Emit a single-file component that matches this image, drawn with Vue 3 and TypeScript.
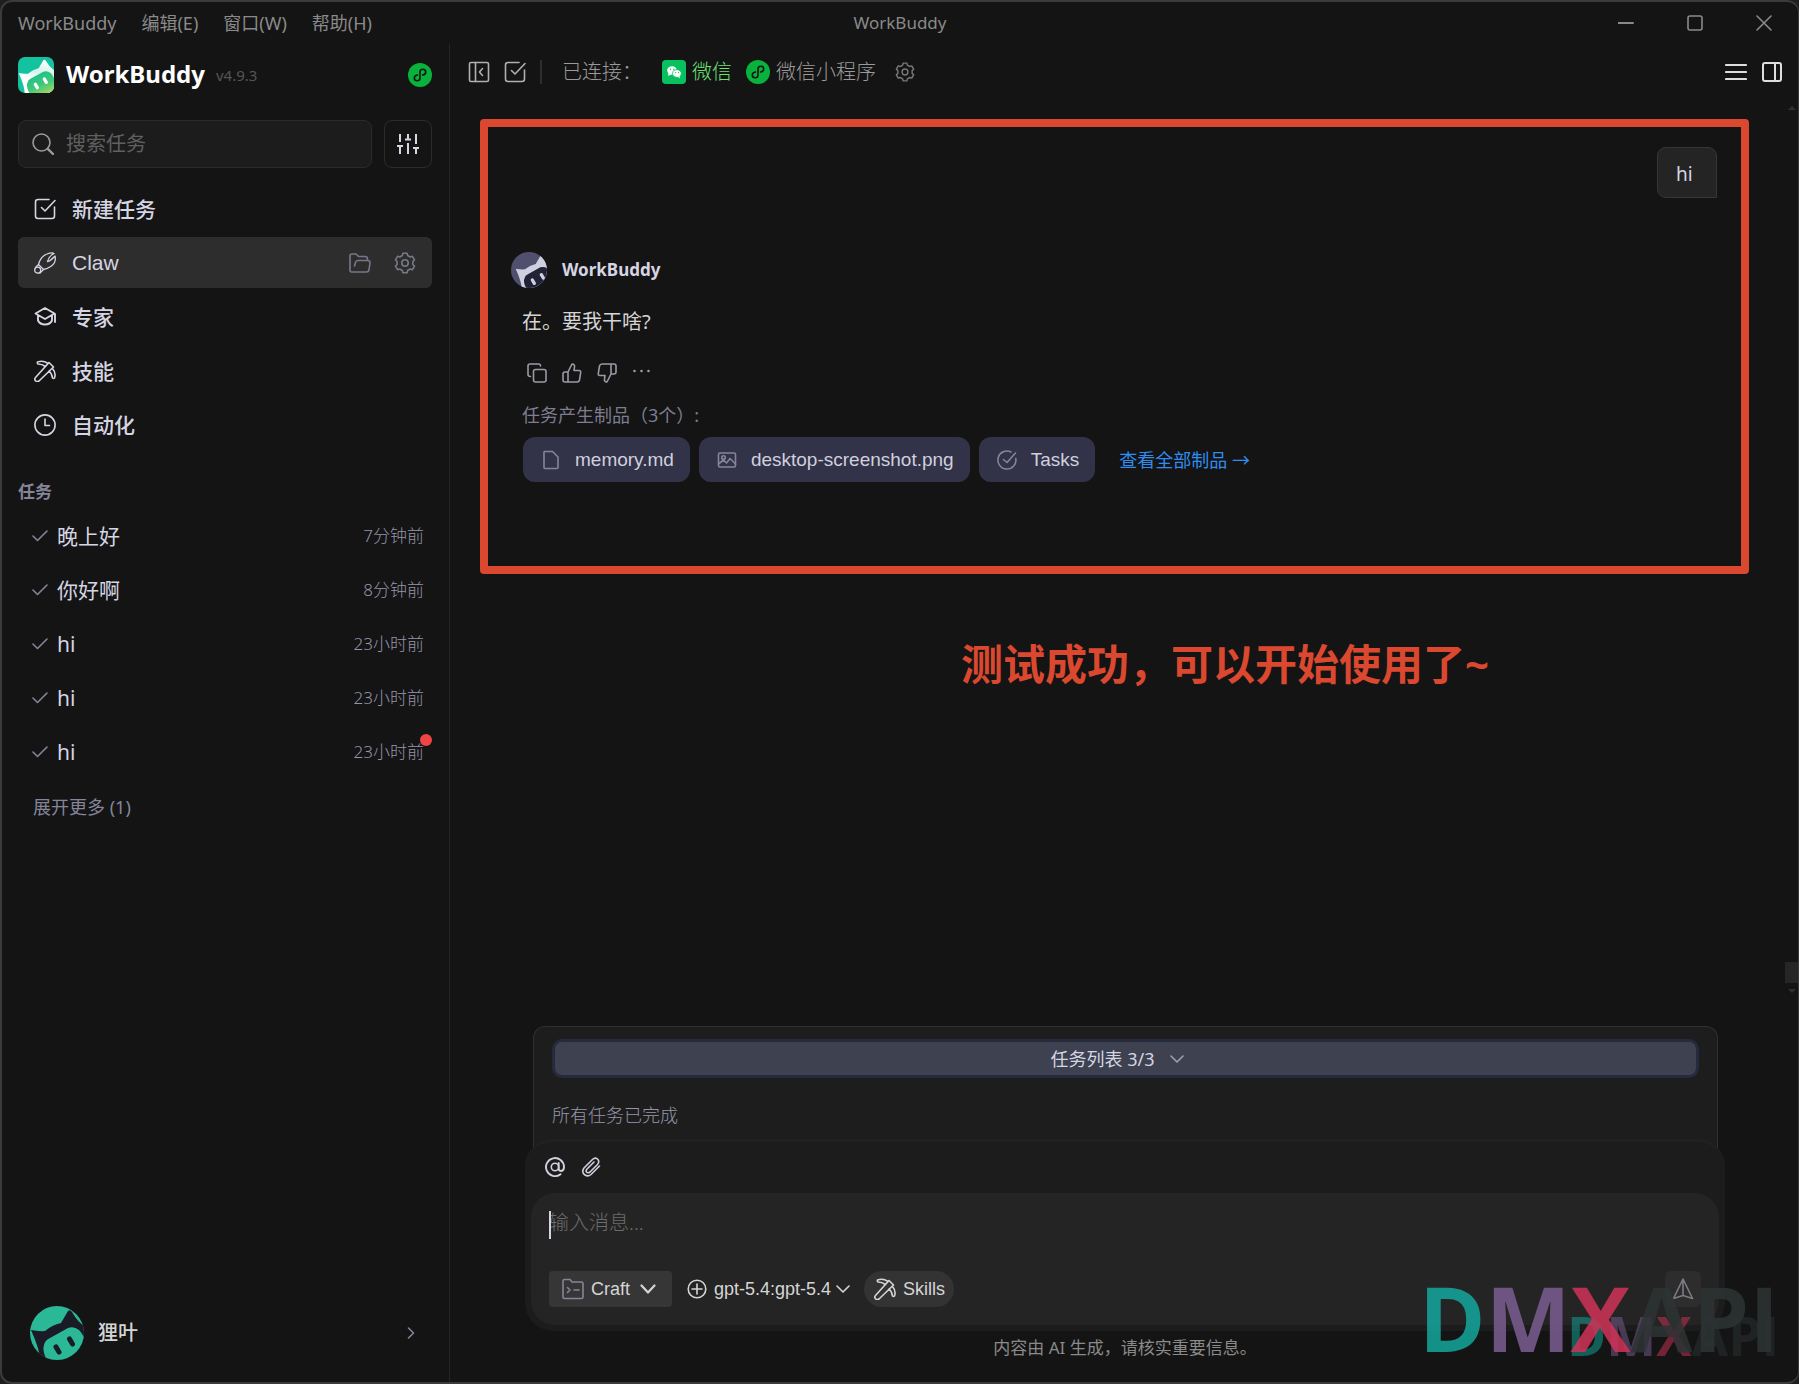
<script setup lang="ts">
import { ref } from 'vue'

interface NavItem {
  id: string
  label: string
  icon: string
}

interface TaskItem {
  id: number
  title: string
  time: string
  unread?: boolean
}

const menus: string[] = ['WorkBuddy', '编辑(E)', '窗口(W)', '帮助(H)']

const navItems: NavItem[] = [
  { id: 'new', label: '新建任务', icon: 'edit' },
  { id: 'claw', label: 'Claw', icon: 'claw' },
  { id: 'expert', label: '专家', icon: 'expert' },
  { id: 'skill', label: '技能', icon: 'pick' },
  { id: 'auto', label: '自动化', icon: 'clock' },
]

const tasks: TaskItem[] = [
  { id: 1, title: '晚上好', time: '7分钟前' },
  { id: 2, title: '你好啊', time: '8分钟前' },
  { id: 3, title: 'hi', time: '23小时前' },
  { id: 4, title: 'hi', time: '23小时前' },
  { id: 5, title: 'hi', time: '23小时前', unread: true },
]

const activeNav = ref('claw')
const query = ref('')
const draft = ref('')
const mode = ref('Craft')
const model = ref('gpt-5.4:gpt-5.4')

const brandLetters = [
  { char: 'D', tone: 'teal' },
  { char: 'M', tone: 'violet' },
  { char: 'X', tone: 'rose' },
  { char: 'A', tone: 'ink' },
  { char: 'P', tone: 'ink' },
  { char: 'I', tone: 'ink' },
]

/* Six-toothed gear outline centred in a 22 unit box */
function gearOutline(): string {
  const points: string[] = []
  for (let tooth = 0; tooth < 6; tooth++) {
    const base = tooth * 60 - 90
    const corners: Array<[number, number]> = [[-12, 10], [12, 10], [19, 8], [41, 8]]
    for (const [offset, radius] of corners) {
      const angle = ((base + offset) * Math.PI) / 180
      points.push(`${(11 + radius * Math.cos(angle)).toFixed(2)} ${(11 + radius * Math.sin(angle)).toFixed(2)}`)
    }
  }
  return `M${points.join('L')}Z`
}

const gearPath = gearOutline()
const headPath = 'M1 24Q8 25.500 15 25Q22 19 31 17L38 5Q40 3 42 6Q47 15 54 20V54H10Q10 44 1 24Z'
const snoutPath = 'M17 54Q12 45 14 39Q15 34 20 32L38 22Q44 20 49 24Q53 28 56 36V54Z'
const eyesPath = 'M26 41L29 46M39.500 33L42.500 38'
const pickPath =
  'M15 2.500L19.500 7L5 21Q3 22.300 1.500 20.700Q0 19 1.500 17.500ZM14 3.500Q9 0 3.500 2Q3 3 4 4Q8 4 11.500 6.500M18.500 8.500Q22.300 13 20.500 18Q19.500 19 18.500 18Q18 13.500 15 11'
</script>

<template>
  <div class="window">
    <header class="titlebar">
      <nav class="menus">
        <button v-for="menu in menus" :key="menu" type="button">{{ menu }}</button>
      </nav>
      <span class="window-title">WorkBuddy</span>
      <div class="window-controls">
        <button type="button" aria-label="最小化">
          <svg width="16" height="16" viewBox="0 0 16 16"><path d="M0 8H15" stroke-width="2" /></svg>
        </button>
        <button type="button" aria-label="最大化">
          <svg width="16" height="16" viewBox="0 0 16 16"><rect x="1" y="1" width="14" height="14" rx="2" /></svg>
        </button>
        <button type="button" aria-label="关闭">
          <svg width="16" height="16" viewBox="0 0 16 16"><path d="M1 1L15 15M15 1L1 15" /></svg>
        </button>
      </div>
    </header>

    <div class="body">
      <aside class="sidebar">
        <div class="brand">
          <svg class="brand-logo" viewBox="0 0 54 54">
            <defs>
              <linearGradient id="snout" x1="0.2" y1="0" x2="0.8" y2="1">
                <stop offset="0" stop-color="#14bf92" />
                <stop offset="0.6" stop-color="#3fc878" />
                <stop offset="1" stop-color="#a2d863" />
              </linearGradient>
              <linearGradient id="fur" x1="0.6" y1="0" x2="0.4" y2="1">
                <stop offset="0" stop-color="#ffffff" />
                <stop offset="0.35" stop-color="#d5f3e8" />
                <stop offset="0.6" stop-color="#ffffff" />
              </linearGradient>
            </defs>
            <rect width="54" height="54" fill="#13c3a0" />
            <path :d="headPath" fill="url(#fur)" />
            <path :d="snoutPath" fill="url(#snout)" />
            <path :d="eyesPath" stroke="#fff" stroke-width="5" stroke-linecap="round" />
          </svg>
          <strong>WorkBuddy</strong>
          <span class="version">v4.9.3</span>
          <svg class="mini-badge" viewBox="0 0 24 24">
            <circle cx="12" cy="12" r="12" fill="#08b23c" />
            <path d="M9.500 12C7.500 12.200 6.300 13.500 6.300 15C6.300 16.600 7.600 17.700 9.200 17.700C10.900 17.700 12 16.500 12 15V9C12 7.500 13.100 6.300 14.800 6.300C16.400 6.300 17.700 7.400 17.700 9C17.700 10.500 16.500 11.800 14.500 12" fill="none" class="mini-line" />
          </svg>
        </div>

        <div class="search-row">
          <label class="search">
            <svg width="22" height="22" viewBox="0 0 22 22"><circle cx="9.500" cy="9.500" r="8.500" /><path d="M15.800 15.800L21 21" stroke-width="2.400" /></svg>
            <input v-model="query" type="text" placeholder="搜索任务" aria-label="搜索任务" />
          </label>
          <button class="filter" type="button" aria-label="筛选">
            <svg width="22" height="22" viewBox="0 0 22 22">
              <path d="M3 1V9M3 13V21M0 13H6M11 1V6M11 10V21M8 6.500H14M19 1V11M19 15V21M16 15H22" />
            </svg>
          </button>
        </div>

        <nav class="nav">
          <div v-for="item in navItems" :key="item.id" class="nav-row" :class="{ active: item.id === activeNav }">
            <button class="nav-main" type="button" @click="activeNav = item.id">
              <svg width="22" height="22" viewBox="0 0 22 22">
                <template v-if="item.icon === 'edit'">
                  <path d="M15 1.500H4Q1.500 1.500 1.500 4V18Q1.500 20.500 4 20.500H18Q20.500 20.500 20.500 18V9" />
                  <path d="M7.500 9.500L11 13L21 2.500" />
                </template>
                <template v-else-if="item.icon === 'claw'">
                  <path d="M4.500 12.500Q6.500 4.500 13 2Q18 0 20 1.500Q15 4 13.500 9.500Q18 8.500 21 4Q22.500 10 17.500 14Q13 17 9.500 17.500M20.500 4.500L15.500 9M4.500 12.500L9.500 17.500M4.500 12.500L1.500 15.500M9.500 17.500L6 21" stroke-width="1.300" />
                  <circle cx="3.700" cy="18.200" r="3" stroke-width="1.300" />
                </template>
                <template v-else-if="item.icon === 'expert'">
                  <path d="M1.500 7.500L11 2L20.500 7.500L11 13Z M4 9.500V14.500Q6 18.500 11 18.500T18 14.500V9.500M21 8V16" stroke-width="1.900" />
                </template>
                <path v-else-if="item.icon === 'pick'" :d="pickPath" />
                <template v-else>
                  <circle cx="11" cy="11" r="10.100" />
                  <path d="M11 5V11.500H15.500" />
                </template>
              </svg>
              <span>{{ item.label }}</span>
            </button>
            <template v-if="item.id === 'claw'">
              <button class="row-action" type="button" aria-label="打开文件夹">
                <svg width="22" height="22" viewBox="0 0 22 22">
                  <path d="M2.500 20Q1 20 1 18V4Q1 2 3 2H7L9.500 4.500H16Q18.500 4.500 18.500 7V8.500M3.500 20H17.500Q19.500 20 20 18L21 11Q21 8.500 19 8.500H9Q7 8.500 6.500 10.500L5.500 14" />
                </svg>
              </button>
              <button class="row-action" type="button" aria-label="设置">
                <svg width="22" height="22" viewBox="0 0 22 22"><path :d="gearPath" /><circle cx="11" cy="11" r="3.200" /></svg>
              </button>
            </template>
          </div>
        </nav>

        <h2>任务</h2>
        <ul class="tasks">
          <li v-for="task in tasks" :key="task.id">
            <button type="button">
              <svg width="16" height="12" viewBox="0 0 16 12"><path d="M1 6L5.500 10.500L15 1" /></svg>
              <span class="task-title">{{ task.title }}</span>
              <time>{{ task.time }}</time>
            </button>
            <i v-if="task.unread" class="unread"></i>
          </li>
        </ul>
        <button class="more" type="button">展开更多 (1)</button>

        <button class="user" type="button">
          <svg class="user-avatar" viewBox="0 0 54 54">
            <rect width="54" height="54" fill="#2bb896" />
            <path :d="headPath" fill="#1b1b27" />
            <path :d="snoutPath" fill="#2bb896" />
            <path :d="eyesPath" stroke="#1b1b27" stroke-width="5" stroke-linecap="round" />
          </svg>
          <span>狸叶</span>
          <svg class="user-arrow" width="8" height="12" viewBox="0 0 8 12"><path d="M1.500 1L6.500 6L1.500 11" /></svg>
        </button>
      </aside>

      <main class="main">
        <header class="toolbar">
          <button type="button" aria-label="收起侧栏">
            <svg width="22" height="22" viewBox="0 0 22 22"><rect x="1.500" y="1.500" width="19" height="19" rx="1.500" /><path d="M7.500 1.500V20.500M14.500 7.500L11.500 11L14.500 14.500" /></svg>
          </button>
          <button type="button" aria-label="新建任务">
            <svg width="22" height="22" viewBox="0 0 22 22"><path d="M15 1.500H4Q1.500 1.500 1.500 4V18Q1.500 20.500 4 20.500H18Q20.500 20.500 20.500 18V9" /><path d="M7.500 9.500L11 13L21 2.500" /></svg>
          </button>
          <i class="divider"></i>
          <span class="connected">已连接：</span>
          <a class="channel wechat" href="#">
            <svg width="24" height="24" viewBox="0 0 24 24">
              <rect width="24" height="24" rx="4" fill="#07c160" />
              <ellipse cx="10" cy="10.500" rx="4.800" ry="4.200" fill="#fff" />
              <path d="M6.500 13L6 16L9 14.500Z" fill="#fff" />
              <ellipse cx="15" cy="13.500" rx="4.400" ry="3.800" fill="#fff" stroke="#07c160" stroke-width="0.800" />
              <path d="M17.500 16L18 18L15.500 17Z" fill="#fff" />
              <circle cx="8.500" cy="9.200" r="0.700" fill="#07c160" /><circle cx="11.800" cy="9.200" r="0.700" fill="#07c160" />
              <circle cx="13.600" cy="12.600" r="0.600" fill="#07c160" /><circle cx="16.500" cy="12.600" r="0.600" fill="#07c160" />
            </svg>
            <span>微信</span>
          </a>
          <a class="channel" href="#">
            <svg width="24" height="24" viewBox="0 0 24 24">
              <circle cx="12" cy="12" r="12" fill="#08b23c" />
              <path d="M9.500 12C7.500 12.200 6.300 13.500 6.300 15C6.300 16.600 7.600 17.700 9.200 17.700C10.900 17.700 12 16.500 12 15V9C12 7.500 13.100 6.300 14.800 6.300C16.400 6.300 17.700 7.400 17.700 9C17.700 10.500 16.500 11.800 14.500 12" fill="none" class="mini-line" />
            </svg>
            <span>微信小程序</span>
          </a>
          <button class="gear" type="button" aria-label="连接设置">
            <svg width="20" height="20" viewBox="0 0 22 22"><path :d="gearPath" /><circle cx="11" cy="11" r="3.200" /></svg>
          </button>
          <div class="toolbar-end">
            <button type="button" aria-label="列表">
              <svg width="22" height="22" viewBox="0 0 22 22"><path d="M1 4H21M1 11H21M1 18H21" stroke-width="2.200" /></svg>
            </button>
            <button type="button" aria-label="右侧面板">
              <svg width="22" height="22" viewBox="0 0 22 22"><rect x="2" y="2" width="18" height="18" rx="2" stroke-width="2" /><path d="M14 2V20" stroke-width="2" /></svg>
            </button>
          </div>
        </header>

        <section class="chat">
          <div class="conversation">
            <p class="bubble">hi</p>
            <article class="reply">
              <div class="author">
                <svg class="bot-avatar" viewBox="0 0 54 54">
                  <rect width="54" height="54" fill="#50506e" />
                  <g transform="translate(6 1)">
                    <path :d="headPath" fill="#cfcfe0" />
                    <path :d="snoutPath" fill="#222236" />
                    <path :d="eyesPath" stroke="#cfcfe0" stroke-width="5" stroke-linecap="round" />
                  </g>
                </svg>
                <strong>WorkBuddy</strong>
              </div>
              <div class="reply-body">
                <p class="answer">在。要我干啥?</p>
                <div class="actions">
                  <button type="button" aria-label="复制">
                    <svg width="20" height="20" viewBox="0 0 20 20"><rect x="6.500" y="6.500" width="12.500" height="12.500" rx="2" /><path d="M3.500 13.500Q1 13.500 1 11.500V3Q1 1 3 1H11.500Q13.500 1 13.500 3" /></svg>
                  </button>
                  <button type="button" aria-label="赞">
                    <svg width="20" height="20" viewBox="0 0 20 20"><path d="M6 9L10 1Q13 1 12.500 4L12 7.500H17Q19 7.500 18.700 9.500L17.500 17Q17 19 15 19H3Q1 19 1 17V11Q1 9 3 9ZM6 9V19" /></svg>
                  </button>
                  <button type="button" aria-label="踩">
                    <svg width="20" height="20" viewBox="0 0 20 20"><path d="M14 11L10 19Q7 19 7.500 16L8 12.500H3Q1 12.500 1.300 10.500L2.500 3Q3 1 5 1H17Q19 1 19 3V9Q19 11 17 11ZM14 11V1" /></svg>
                  </button>
                  <button type="button" aria-label="更多">
                    <svg width="20" height="20" viewBox="0 0 20 20"><path d="M2.500 8V8.010M9.500 8V8.010M16.500 8V8.010" stroke-width="2.600" /></svg>
                  </button>
                </div>
                <p class="artifact-label">任务产生制品（3个）:</p>
                <div class="artifacts">
                  <button class="chip" type="button">
                    <svg width="20" height="20" viewBox="0 0 20 20"><path d="M3 2Q3 1.500 4 1.500H11.500L17 7V17.500Q17 18.500 16 18.500H4Q3 18.500 3 17.500Z" /></svg>
                    memory.md
                  </button>
                  <button class="chip" type="button">
                    <svg width="20" height="20" viewBox="0 0 20 20"><rect x="1.500" y="3" width="17" height="14" rx="1.500" /><circle cx="6.500" cy="7.500" r="1.800" /><path d="M2 13.500L6.500 10L9.500 13L13 8.500L18.500 14" /></svg>
                    desktop-screenshot.png
                  </button>
                  <button class="chip" type="button">
                    <svg width="20" height="20" viewBox="0 0 20 20"><path d="M14 2A9 9 0 1 0 18.800 8.500M6.500 9.500L10 12.500L18.500 3" /></svg>
                    Tasks
                  </button>
                  <a href="#">查看全部制品 →</a>
                </div>
              </div>
            </article>
          </div>
          <p class="notice">测试成功，可以开始使用了~</p>
          <div class="scrollbar" aria-hidden="true"><i class="up"></i><i class="thumb"></i><i class="down"></i></div>
        </section>

        <footer class="composer">
          <section class="task-panel">
            <button class="task-toggle" type="button">
              <span>任务列表 3/3</span>
              <svg width="14" height="8" viewBox="0 0 14 8"><path d="M1 1L7 7L13 1" /></svg>
            </button>
            <p>所有任务已完成</p>
          </section>
          <form class="prompt" @submit.prevent>
            <div class="attach">
              <button type="button" aria-label="提及">
                <svg width="20" height="20" viewBox="0 0 20 20"><circle cx="10" cy="10" r="3.700" /><path d="M13.700 6V11.500Q13.700 14 16.200 14Q19 13.500 19 10A9 9 0 1 0 15.500 17.200" stroke-width="1.900" /></svg>
              </button>
              <button type="button" aria-label="附件">
                <svg width="20" height="20" viewBox="0 0 20 20"><path d="M18.500 9L10 17.500Q7 20 4 18Q0 15 3 11L11.500 2.500Q14 0 16.500 2Q19 4.500 16.500 7.500L9 15Q7 16.500 5.500 15Q4.500 13.500 6 12L13 5" /></svg>
              </button>
            </div>
            <div class="field">
              <i class="caret"></i>
              <textarea v-model="draft" rows="1" placeholder="输入消息..." aria-label="输入消息"></textarea>
              <div class="controls">
                <label class="mode">
                  <svg width="22" height="22" viewBox="0 0 22 22"><path d="M1 19V3Q1 1.500 2.500 1.500H8L10 4H19.500Q21 4 21 5.500V19Q21 20.500 19.500 20.500H2.500Q1 20.500 1 19ZM5.500 9.500L8 12L5.500 14.500M12 12H17" /></svg>
                  <select v-model="mode" aria-label="模式"><option>Craft</option></select>
                  <svg class="arrow" width="16" height="10" viewBox="0 0 16 10"><path d="M1.500 1.500L8 8.500L14.500 1.500" stroke-width="2.200" /></svg>
                </label>
                <label class="model">
                  <svg class="plus" width="20" height="20" viewBox="0 0 20 20"><circle cx="10" cy="10" r="8.800" /><path d="M10 5V15M5 10H15" /></svg>
                  <select v-model="model" aria-label="模型"><option>gpt-5.4:gpt-5.4</option></select>
                  <svg class="arrow" width="14" height="8" viewBox="0 0 14 8"><path d="M1 1L7 7L13 1" /></svg>
                </label>
                <button class="skills" type="button">
                  <svg width="22" height="22" viewBox="0 0 22 22"><path :d="pickPath" /></svg>
                  Skills
                </button>
                <button class="send" type="submit" aria-label="发送">
                  <svg width="22" height="22" viewBox="0 0 22 22"><path d="M11 1L20.500 20.500L11 17.500L1.500 20.500ZM11 1V17.500" /></svg>
                </button>
              </div>
            </div>
          </form>
          <p class="disclaimer">内容由 AI 生成，请核实重要信息。</p>
        </footer>
      </main>
    </div>

    <div class="watermark small" aria-hidden="true"><span v-for="l in brandLetters" :key="l.char" :class="l.tone">{{ l.char }}</span></div>
    <div class="watermark large" aria-hidden="true"><span v-for="l in brandLetters" :key="l.char" :class="l.tone">{{ l.char }}</span></div>
  </div>
</template>

<style>
html,
body {
  background: #1e1e1e;
}
</style>

<style scoped>
* {
  box-sizing: border-box;
}

.window {
  position: relative;
  display: flex;
  flex-direction: column;
  min-height: 100vh;
  overflow: hidden;
  background: #141414;
  border: 2px solid #3b3b3b;
  border-right-width: 1px;
  border-radius: 12px;
  color: #d5d5e3;
  font-family: 'Noto Sans', 'Noto Sans CJK SC', sans-serif;
  font-size: 18px;
  line-height: 24px;
}

p,
h2,
ul {
  margin: 0;
  padding: 0;
}

button,
input,
select,
textarea {
  margin: 0;
  padding: 0;
  border: 0;
  background: none;
  color: inherit;
  font: inherit;
}

button {
  display: flex;
  align-items: center;
}

svg {
  flex: none;
  display: block;
  fill: none;
  stroke: currentColor;
  stroke-width: 1.6;
  stroke-linecap: round;
  stroke-linejoin: round;
}

svg rect[fill],
svg circle[fill],
svg ellipse[fill]:not([stroke]),
svg path[fill]:not([stroke]) {
  stroke: none;
}

svg path.mini-line[fill] {
  stroke: #141414;
}

a {
  color: inherit;
  text-decoration: none;
}

.titlebar {
  display: grid;
  grid-template-columns: 1fr auto 1fr;
  align-items: center;
  height: 42px;
  color: #8a8a8a;
}

.menus {
  display: flex;
  gap: 25px;
  padding-left: 16px;
}

.window-title {
  font-size: 17px;
}

.window-controls {
  display: flex;
  justify-content: flex-end;
  padding-right: 11px;
}

.window-controls button {
  width: 46px;
  height: 42px;
  justify-content: center;
  margin-left: 23px;
}

.body {
  flex: 1;
  display: flex;
}

.sidebar {
  width: 448px;
  flex: none;
  display: flex;
  flex-direction: column;
  padding: 13px 17px 22px 16px;
  border-right: 1px solid #262626;
}

.brand {
  display: flex;
  align-items: center;
  height: 36px;
}

.brand-logo {
  width: 36px;
  height: 36px;
  border-radius: 7px;
}

.brand strong {
  margin-left: 12px;
  padding-bottom: 2px;
  color: #fff;
  font-size: 24px;
}

.version {
  margin-left: 11px;
  color: #555;
  font-size: 15px;
}

.mini-badge {
  width: 24px;
  height: 24px;
  margin-left: auto;
}

.search-row {
  display: flex;
  gap: 12px;
  margin: 27px 0 15px;
}

.search {
  flex: 1;
  display: flex;
  align-items: center;
  gap: 12px;
  height: 48px;
  padding: 0 14px 0 13px;
  border: 1px solid #2b2b2b;
  border-radius: 8px;
  background: #1c1c1c;
  color: #9a9a9a;
}

.search input {
  flex: 1;
  min-width: 0;
  outline: none;
  font-size: 20px;
}

.search input::placeholder,
.field textarea::placeholder {
  color: #606060;
  opacity: 1;
}

.filter {
  width: 48px;
  height: 48px;
  justify-content: center;
  border: 1px solid #2b2b2b;
  border-radius: 8px;
}

.filter svg {
  stroke-width: 2;
  stroke-linecap: butt;
}

.nav {
  display: flex;
  flex-direction: column;
  gap: 3px;
}

.nav-row {
  display: flex;
  align-items: center;
  height: 51px;
  padding: 0 16px;
  border-radius: 6px;
}

.nav-row.active {
  background: #2d2d2d;
}

.nav-main {
  flex: 1;
  gap: 16px;
  height: 51px;
  font-size: 21px;
  font-weight: 500;
}

.active .nav-main {
  font-family: 'Liberation Sans', sans-serif;
  font-weight: 400;
}

.row-action {
  margin-left: 23px;
  color: #77778a;
}

h2 {
  margin-top: 30px;
  color: #85859a;
  font-size: 17px;
  font-weight: 700;
}

.tasks {
  display: flex;
  flex-direction: column;
  gap: 3px;
  margin-top: 6px;
  list-style: none;
}

.tasks li {
  position: relative;
}

.tasks button {
  width: 100%;
  height: 51px;
  padding: 0 8px 0 14px;
}

.tasks svg {
  color: #85859a;
}

.task-title {
  margin-left: 9px;
  font-size: 21px;
}

.tasks time {
  margin-left: auto;
  color: #9595aa;
  font-size: 17px;
  font-weight: 300;
}

.unread {
  position: absolute;
  top: 8px;
  right: 0;
  width: 12px;
  height: 12px;
  border-radius: 50%;
  background: #f04545;
}

.more {
  align-self: flex-start;
  margin: 18px 0 0 15px;
  color: #85859a;
}

.user {
  margin-top: auto;
  padding: 0 17px 0 12px;
  font-size: 20px;
  font-weight: 500;
  color: #d5d5d5;
}

.user-avatar {
  width: 54px;
  height: 54px;
  border-radius: 50%;
}

.user span {
  margin-left: 14px;
}

.user-arrow {
  margin-left: auto;
  color: #85859a;
}

.main {
  flex: 1;
  min-width: 0;
  display: flex;
  flex-direction: column;
}

.toolbar {
  display: flex;
  align-items: center;
  height: 54px;
  margin-bottom: 21px;
  padding: 2px 15px 0 18px;
  color: #9a9a9a;
  font-size: 20px;
  font-weight: 300;
}

.toolbar > button {
  margin-right: 14px;
  color: #b0b0b0;
}

.divider {
  width: 2px;
  height: 24px;
  background: #2d2d2d;
}

.connected {
  margin-left: 20px;
  width: 100px;
}

.channel {
  display: flex;
  gap: 6px;
  margin-right: 14px;
}

.channel span {
  line-height: 24px;
}

.wechat {
  color: #6be374;
}

.toolbar > .gear {
  margin: 0 0 0 5px;
  color: #77777a;
}

.toolbar-end {
  display: flex;
  gap: 14px;
  margin-left: auto;
  color: #dedede;
}

.chat {
  position: relative;
  flex: 1;
  padding: 0 49px 0 30px;
}

.conversation {
  padding: 20px 24px 84px 23px;
  border: 8px solid #d9482f;
  border-radius: 4px;
  display: flex;
  flex-direction: column;
}

.bubble {
  align-self: flex-end;
  width: 60px;
  height: 51px;
  padding: 14px 18px 10px;
  border: 1px solid #363636;
  border-radius: 9px 9px 0 9px;
  background: #242424;
  font-size: 19px;
}

.reply {
  margin-top: 54px;
}

.author {
  display: flex;
  align-items: center;
  gap: 15px;
  height: 36px;
  font-size: 17px;
}

.bot-avatar {
  width: 36px;
  height: 36px;
  border-radius: 50%;
}

.reply-body {
  padding-left: 11px;
}

.answer {
  margin-top: 22px;
  color: #d5d5d5;
  font-size: 20px;
}

.actions {
  display: flex;
  gap: 15px;
  margin: 29px 0 0 5px;
  color: #9a9aa5;
}

.artifact-label {
  margin: 20px 0 10px;
  color: #7d7d92;
}

.artifacts {
  display: flex;
  align-items: center;
  gap: 9px;
  padding-left: 1px;
}

.chip {
  gap: 14px;
  height: 45px;
  padding: 0 16px 0 18px;
  border-radius: 12px;
  background: #323248;
  color: #d0d0de;
  font-family: 'Liberation Sans', sans-serif;
  font-size: 19px;
}

.chip svg {
  color: #85859a;
}

.artifacts a {
  margin-left: 15px;
  color: #2f8cf0;
}

.notice {
  padding: 60px 0 0 481px;
  color: #d9482f;
  font-size: 42px;
  font-weight: 700;
  line-height: 60px;
}

.scrollbar {
  position: absolute;
  top: -13px;
  right: 0;
  bottom: 33px;
  width: 13px;
  display: flex;
  flex-direction: column;
  align-items: center;
}

.up,
.down {
  border: 4px solid transparent;
}

.up {
  border-top: 0;
  border-bottom-color: #303030;
}

.down {
  border-bottom: 0;
  border-top-color: #303030;
}

.thumb {
  width: 13px;
  height: 21px;
  margin: auto 0 6px;
  background: #262626;
}

.composer {
  padding: 0 73px 22px 75px;
}

.task-panel {
  margin: 0 7px 0 8px;
  padding: 12px 18px 24px;
  border: 1px solid #303030;
  border-bottom: 0;
  border-radius: 12px 12px 0 0;
  background: #1d1d1d;
}

.task-toggle {
  width: 100%;
  height: 39px;
  justify-content: center;
  gap: 16px;
  padding-right: 16px;
  border: 3px solid #252b3c;
  border-radius: 10px;
  background: #3d4150;
}

.task-toggle svg {
  color: #a0a0aa;
}

.task-panel p {
  margin-top: 25px;
  color: #9595aa;
  font-weight: 300;
}

.prompt {
  position: relative;
  margin-top: -12px;
  padding: 15px 6px 6px;
  border-top: 3px solid #212121;
  border-radius: 28px;
  background: #1c1c1c;
}

.attach {
  display: flex;
  gap: 16px;
  padding-left: 14px;
}

.attach svg {
  color: #d0d0de;
}

.field {
  position: relative;
  margin-top: 16px;
  padding: 18px 18px 18px;
  border-radius: 24px;
  background: #242424;
}

.caret {
  position: absolute;
  top: 18px;
  left: 18px;
  width: 2px;
  height: 28px;
  background: #d5d5e8;
}

.field textarea {
  display: block;
  width: 100%;
  height: 60px;
  outline: none;
  resize: none;
  font-size: 20px;
  font-weight: 300;
}

.field textarea::placeholder {
  color: #6c6c6c;
}

.controls {
  display: flex;
  align-items: center;
  font-family: 'Liberation Sans', sans-serif;
  color: #d5d5d5;
}

.controls select {
  appearance: none;
  outline: none;
}

.mode,
.model,
.skills,
.send {
  display: flex;
  align-items: center;
  height: 36px;
}

.mode {
  gap: 7px;
  padding: 0 16px 0 13px;
  border-radius: 4px;
  background: #363636;
}

.mode svg:first-child {
  color: #85859a;
}

.mode .arrow {
  margin-left: 2px;
}

.model {
  gap: 7px;
  margin: 0 14px 0 15px;
}

.model .arrow {
  margin-left: -3px;
}

.skills {
  gap: 7px;
  padding: 0 9px 0 10px;
  border-radius: 18px;
  background: #333;
}

.send {
  width: 36px;
  justify-content: center;
  margin-left: auto;
  border-radius: 6px;
  background: #2d2d2d;
  color: #7c7c84;
}

.disclaimer {
  margin-top: 5px;
  color: #8a8a8a;
  font-size: 17px;
  text-align: center;
}

.watermark {
  position: absolute;
  right: 19px;
  display: flex;
  font-family: 'Open Sans', sans-serif;
  font-weight: 700;
  line-height: normal;
  pointer-events: none;
}

.large {
  bottom: 4px;
  font-size: 90px;
  opacity: 0.85;
}

.small {
  bottom: 10px;
  font-size: 53px;
  opacity: 0.5;
}

.teal {
  color: #14a79c;
}

.violet {
  color: #7c5e92;
}

.rose {
  color: #d03358;
}

.ink {
  color: #2d3334;
}
</style>
